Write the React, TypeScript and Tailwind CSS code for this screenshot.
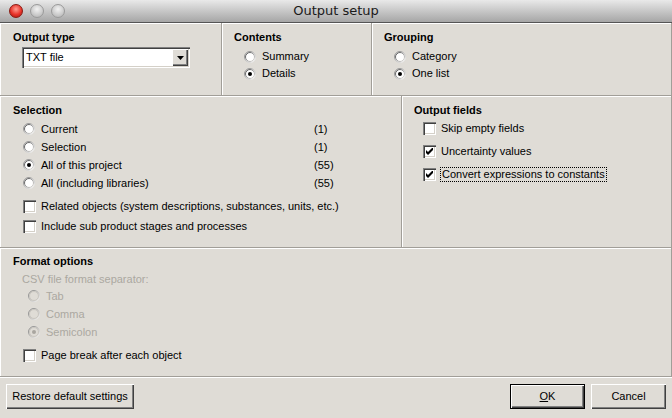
import React from "react";

function Radio({ checked = false, disabled = false }: { checked?: boolean; disabled?: boolean }) {
  return (
    <svg width="12" height="12" viewBox="0 0 12 12" className="shrink-0">
      <defs>
        <linearGradient id="ro" x1="0" y1="0" x2="1" y2="1">
          <stop offset="0" stopColor="#7d7d7d" />
          <stop offset="0.5" stopColor="#b5b5b5" />
          <stop offset="1" stopColor="#ffffff" />
        </linearGradient>
        <linearGradient id="ri" x1="0" y1="0" x2="1" y2="1">
          <stop offset="0" stopColor="#3c3c3c" />
          <stop offset="0.5" stopColor="#9a9a9a" />
          <stop offset="1" stopColor="#e4e1db" />
        </linearGradient>
      </defs>
      <circle cx="6" cy="6" r="5.5" fill={disabled ? "#dfdcd6" : "#ffffff"} stroke="url(#ro)" strokeWidth="1" />
      <circle cx="6" cy="6" r="4.5" fill="none" stroke={disabled ? "#c9c6c0" : "url(#ri)"} strokeWidth="1" />
      {checked && <circle cx="6" cy="6" r="2" fill={disabled ? "#a9a6a0" : "#000000"} />}
    </svg>
  );
}

function Checkbox({ checked = false }: { checked?: boolean }) {
  return (
    <div className="w-[13px] h-[13px] shrink-0 bg-white shadow-[inset_1px_1px_0_#808080,inset_2px_2px_0_#404040,inset_-1px_-1px_0_#ffffff,inset_-2px_-2px_0_#d4d0c8] flex items-center justify-center">
      {checked && (
        <svg width="7" height="7" viewBox="0 0 7 7">
          <path d="M0 2 L2 4 L7 -1 L7 2 L2 7 L0 5 Z" fill="#000" />
        </svg>
      )}
    </div>
  );
}

function Heading({ children }: { children: React.ReactNode }) {
  return <div className="font-bold leading-[13px] h-[13px] pt-[1px]">{children}</div>;
}

const panel =
  "border-r border-b border-[#a19e98] shadow-[inset_1px_1px_0_#ffffff]";

const button =
  "h-[25px] bg-[#dfdcd6] shadow-[inset_1px_1px_0_#ffffff,inset_-1px_-1px_0_#404040,inset_-2px_-2px_0_#808080] flex items-center justify-center text-[11px]";

export default function App() {
  return (
    <div className="w-[672px] h-[418px] bg-[#dfdcd6] flex flex-col text-[11px] text-black overflow-hidden font-['Liberation_Sans',Arial,sans-serif]">
      {/* title bar */}
      <div className="h-[23px] shrink-0 relative flex items-center justify-center bg-gradient-to-b from-[#e9e9e9] to-[#a6a6a6] border-b border-[#555555]">
        <div className="absolute left-[9px] top-[4px] flex gap-[7px]">
          <div className="w-[14px] h-[14px] rounded-full border border-[#8a1a12] bg-[radial-gradient(circle_at_50%_35%,#ff9c90_0%,#e8332a_55%,#a3150c_100%)]" />
          <div className="w-[14px] h-[14px] rounded-full border border-[#9a9a9a] bg-[radial-gradient(circle_at_50%_35%,#f2f2f2_0%,#cacaca_60%,#b0b0b0_100%)]" />
          <div className="w-[14px] h-[14px] rounded-full border border-[#9a9a9a] bg-[radial-gradient(circle_at_50%_35%,#f2f2f2_0%,#cacaca_60%,#b0b0b0_100%)]" />
        </div>
        <span className="font-['DejaVu_Sans',sans-serif] text-[13px] text-[#1a1a1a]">Output setup</span>
      </div>

      {/* row 1 */}
      <div className="flex h-[73px] shrink-0">
        <div className={`${panel} w-[222px] pl-[13px] pt-[7px]`}>
          <Heading>Output type</Heading>
          <div className="mt-[4px] ml-[9px] w-[168px] h-[21px] bg-white shadow-[inset_1px_1px_0_#808080,inset_2px_2px_0_#404040,inset_-1px_-1px_0_#ffffff,inset_-2px_-2px_0_#d4d0c8] flex items-center pl-[4px] pr-[2px]">
            <span className="flex-1 leading-[13px]">TXT file</span>
            <div className="w-[16px] h-[17px] bg-[#dfdcd6] shadow-[inset_1px_1px_0_#ffffff,inset_-1px_-1px_0_#404040,inset_-2px_-2px_0_#808080] flex items-center justify-center">
              <svg width="7" height="4" viewBox="0 0 7 4">
                <path d="M0 0 H7 L3.5 4 Z" fill="#000" />
              </svg>
            </div>
          </div>
        </div>
        <div className={`${panel} w-[150px] pl-[12px] pt-[7px]`}>
          <Heading>Contents</Heading>
          <div className="mt-[5px] ml-[10px]">
            <div className="h-[17px] flex items-center gap-[6px]">
              <Radio />
              <span>Summary</span>
            </div>
            <div className="h-[17px] flex items-center gap-[6px]">
              <Radio checked />
              <span>Details</span>
            </div>
          </div>
        </div>
        <div className={`${panel} flex-1 pl-[12px] pt-[7px]`}>
          <Heading>Grouping</Heading>
          <div className="mt-[5px] ml-[10px]">
            <div className="h-[17px] flex items-center gap-[6px]">
              <Radio />
              <span>Category</span>
            </div>
            <div className="h-[17px] flex items-center gap-[6px]">
              <Radio checked />
              <span>One list</span>
            </div>
          </div>
        </div>
      </div>

      {/* row 2 */}
      <div className="flex h-[152px] shrink-0">
        <div className={`${panel} w-[402px] pl-[13px] pt-[7px]`}>
          <Heading>Selection</Heading>
          <div className="mt-[4px] ml-[10px]">
            {[
              ["Current", "(1)", false],
              ["Selection", "(1)", false],
              ["All of this project", "(55)", true],
              ["All (including libraries)", "(55)", false],
            ].map(([label, count, checked]) => (
              <div key={label as string} className="h-[18px] flex items-center">
                <Radio checked={checked as boolean} />
                <span className="ml-[6px] w-[273px]">{label}</span>
                <span>{count}</span>
              </div>
            ))}
          </div>
          <div className="mt-[4px] ml-[10px]">
            <div className="h-[20px] flex items-center gap-[5px]">
              <Checkbox />
              <span>Related objects (system descriptions, substances, units, etc.)</span>
            </div>
            <div className="h-[20px] flex items-center gap-[5px]">
              <Checkbox />
              <span>Include sub product stages and processes</span>
            </div>
          </div>
        </div>
        <div className={`${panel} flex-1 pl-[12px] pt-[7px]`}>
          <Heading>Output fields</Heading>
          <div className="ml-[9px] mt-[1px]">
            <div className="h-[23px] flex items-center gap-[5px]">
              <Checkbox />
              <span>Skip empty fields</span>
            </div>
            <div className="h-[23px] flex items-center gap-[5px]">
              <Checkbox checked />
              <span>Uncertainty values</span>
            </div>
            <div className="h-[23px] flex items-center gap-[4px]">
              <Checkbox checked />
              <span className="border border-dotted border-black px-[1px] leading-[13px]">
                Convert expressions to constants
              </span>
            </div>
          </div>
        </div>
      </div>

      {/* row 3 */}
      <div className={`${panel} h-[129px] shrink-0 pl-[13px] pt-[6px]`}>
        <Heading>Format options</Heading>
        <div className="ml-[9px] mt-[6px] h-[13px] leading-[13px] text-[#aba8a1]">CSV file format separator:</div>
        <div className="ml-[15px] mt-[1px] text-[#aba8a1]">
          <div className="h-[18px] flex items-center gap-[6px]">
            <Radio disabled />
            <span>Tab</span>
          </div>
          <div className="h-[18px] flex items-center gap-[6px]">
            <Radio disabled />
            <span>Comma</span>
          </div>
          <div className="h-[18px] flex items-center gap-[6px]">
            <Radio disabled checked />
            <span>Semicolon</span>
          </div>
        </div>
        <div className="ml-[10px] mt-[4px] h-[20px] flex items-center gap-[5px]">
          <Checkbox />
          <span>Page break after each object</span>
        </div>
      </div>

      {/* bottom */}
      <div className="flex-1 shadow-[inset_0_1px_0_#ffffff] flex items-start pt-[7px] px-[6px]">
        <button className={`${button} w-[128px]`}>Restore default settings</button>
        <div className="flex-1" />
        <button className={`${button} w-[75px] border border-black`}>
          <span className="underline">O</span>K
        </button>
        <button className={`${button} w-[75px] ml-[6px]`}>Cancel</button>
      </div>
    </div>
  );
}
